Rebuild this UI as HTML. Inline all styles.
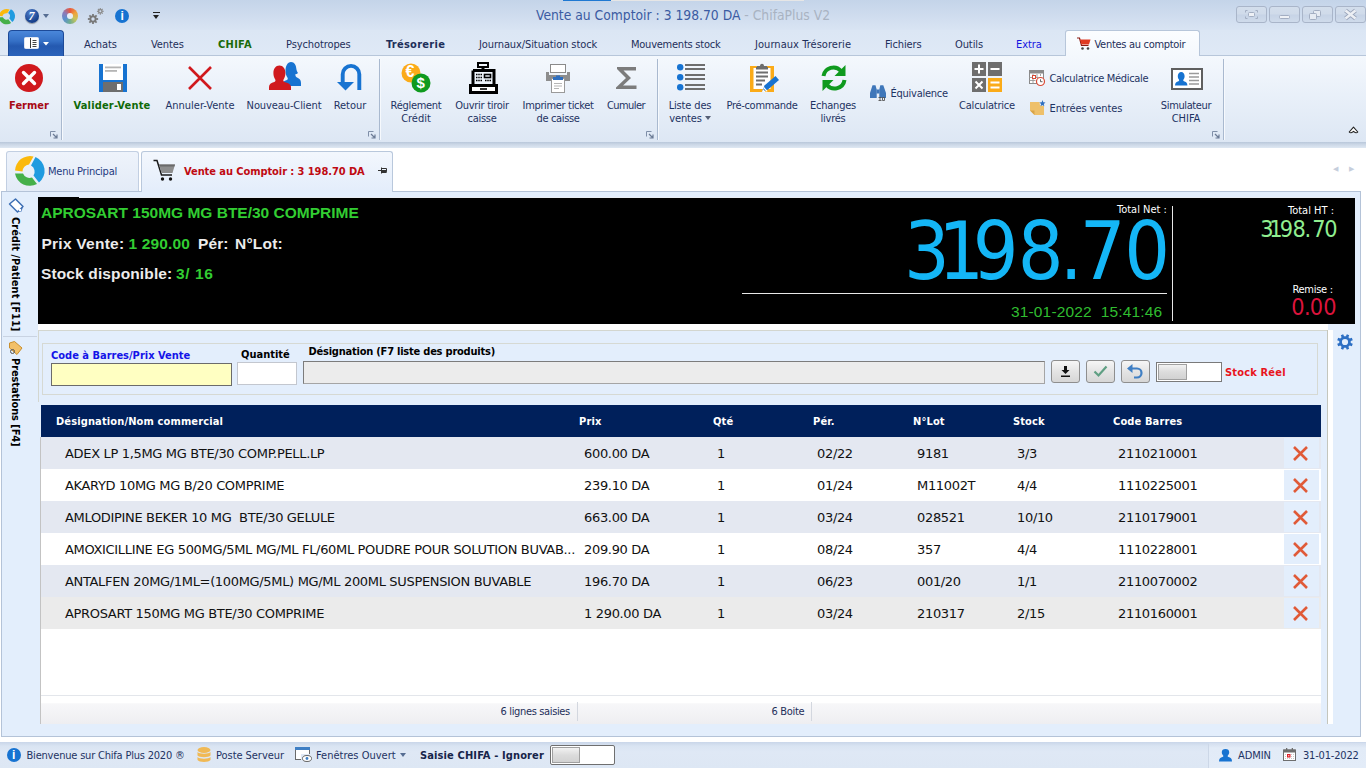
<!DOCTYPE html>
<html lang="fr">
<head>
<meta charset="utf-8">
<title>Vente au Comptoir : 3 198.70 DA - ChifaPlus V2</title>
<style>
html,body{margin:0;padding:0}
body{width:1366px;height:768px;overflow:hidden;position:relative;background:#fff;font-family:"Liberation Sans",sans-serif;font-size:11.5px;color:#1e2f5a}
.a{position:absolute}
.t{position:absolute;white-space:nowrap;line-height:14px}
.c{position:absolute;white-space:nowrap;text-align:center;line-height:13px}
svg{position:absolute;overflow:visible}
/* title bar */
#title{left:0;top:0;width:1366px;height:30px;background:linear-gradient(#c4d4e9,#d9e4f3)}
#tabs{left:0;top:30px;width:1366px;height:25px;background:linear-gradient(#dbe6f4,#dfe9f6)}
#ribbon{left:0;top:55px;width:1366px;height:87px;background:linear-gradient(#f4f8fd 0%,#e9f0f9 45%,#dde7f4 100%);border-top:1px solid #b7c6da;box-sizing:border-box}
#ribbot{left:0;top:142px;width:1366px;height:6px;background:linear-gradient(#b9c7da,#cbd7e6 40%,#dfe8f3)}
.sep{position:absolute;top:59px;width:1px;height:81px;background:#a9b9cf;box-shadow:1px 0 0 #f6f9fd}
.gm{position:absolute;top:131px;width:7px;height:7px}
.rtab{position:absolute;top:38px;letter-spacing:-.1px;line-height:14px;white-space:nowrap;font-size:11.5px;color:#1e2f5a}
.wb{top:6px;width:31px;height:17px;box-sizing:border-box;border:1px solid #a9b5c9;border-radius:3px;background:linear-gradient(#d3deec 0%,#d0dbea 48%,#c6d3e6 52%,#cfdbeb 100%)}
.rtab{font-family:"DejaVu Sans Condensed","Liberation Sans",sans-serif;font-size:11px}
.rl{font-family:"DejaVu Sans Condensed","Liberation Sans",sans-serif;font-size:11px;color:#1e3363}
.c.rl{line-height:13px}
.t.rl{line-height:14px}
.vt{font-family:"DejaVu Sans Condensed","Liberation Sans",sans-serif;font-size:11px;font-weight:700;color:#000;transform-origin:0 0;transform:rotate(90deg);line-height:12px}
.bp{font-family:"Liberation Sans",sans-serif;font-weight:700;font-size:15.500px;line-height:18px;white-space:pre}
.fl{font-family:"DejaVu Sans Condensed","Liberation Sans",sans-serif;font-size:11px;font-weight:700;color:#000;line-height:14px}
.btn{top:360px;width:29px;height:23px;box-sizing:border-box;border:1px solid #8e8e8e;border-radius:3px;background:linear-gradient(#f6f6f6,#e4e4e4 50%,#d6d6d6)}
.gh{top:415px;font-family:"DejaVu Sans Condensed","Liberation Sans",sans-serif;font-size:11px;font-weight:700;color:#fff;line-height:14px;letter-spacing:.13px}
.gr{left:41px;width:1279.500px;height:32px;font-family:"DejaVu Sans","Liberation Sans",sans-serif;font-size:13px;letter-spacing:-.33px;color:#111;line-height:34px;white-space:pre}
.gc{top:0;white-space:pre}
.xc{left:1243px;top:1px;width:35px;height:30px;background:#e3eefc}
.sb{top:749px}
</style>
</head>
<body>
<!-- TITLE BAR -->
<div class="a" id="title"></div>
<div class="a" id="tabs"></div>
<div class="a" id="ribbon"></div>
<div class="a" id="ribbot"></div>

<div class="t" id="ttl" style="left:536px;top:5px;font-family:'DejaVu Sans Condensed','Liberation Sans',sans-serif;font-size:13.75px;line-height:20px;color:#3b5ba2">Vente au Comptoir : 3 198.70 DA<span style="color:#a9b3c2"> - ChifaPlus V2</span></div>


<div class="a" style="left:563px;top:0;width:48px;height:1px;background:#1e78d2"></div><div class="a" style="left:611px;top:0;width:193px;height:1px;background:#e6e6e6"></div>
<!-- QAT icons -->
<svg style="left:-2.500px;top:6.500px" width="19.500" height="19.500" viewBox="0 0 20 20">
 <path d="M1 9 A8 8 0 0 1 12 2.6 L9.5 6.5 A4 4 0 0 0 4.6 9.6 Z" fill="#fbb90c"/>
 <path d="M13.2 2.2 A8 8 0 0 1 14.6 15.4 L11.6 11.6 A4 4 0 0 0 10.4 6.2 Z" fill="#1f9be0"/>
 <path d="M13.4 16.4 A8 8 0 0 1 0.9 10.6 L5 10.6 A4 4 0 0 0 10.6 12.6 Z" fill="#45b04a"/>
</svg>
<div class="a" style="left:25px;top:9px;width:14px;height:14px;border-radius:50%;background:radial-gradient(circle at 40% 30%,#4f7fcc,#123a86 75%);box-shadow:0 1px 1px rgba(0,0,0,.35)"></div>
<div class="t" style="left:28.5px;top:9px;font:italic bold 12px/14px 'Liberation Serif',serif;color:#fff">7</div>
<div class="a" style="left:43px;top:14px;border:3.5px solid transparent;border-top:4px solid #566d92;border-bottom:0"></div>
<div class="a" style="left:62px;top:8px;width:16px;height:16px;border-radius:50%;background:conic-gradient(#e9573d,#f0a23a,#c9c45a,#6fae8f,#5b8fcf,#8c7ab8,#e9573d)"></div>
<div class="a" style="left:67px;top:13px;width:6px;height:6px;border-radius:50%;background:#e8eef7"></div>
<svg style="left:87.800px;top:13.800px" width="10" height="10" viewBox="0 0 10 10"><path d="M10.12 4.11L10.12 5.89L8.60 5.86L8.15 6.93L9.25 7.99L7.99 9.25L6.93 8.15L5.86 8.60L5.89 10.12L4.11 10.12L4.14 8.60L3.07 8.15L2.01 9.25L0.75 7.99L1.85 6.93L1.40 5.86L-0.12 5.89L-0.12 4.11L1.40 4.14L1.85 3.07L0.75 2.01L2.01 0.75L3.07 1.85L4.14 1.40L4.11 -0.12L5.89 -0.12L5.86 1.40L6.93 1.85L7.99 0.75L9.25 2.01L8.15 3.07L8.60 4.14ZM6.70 5.00A1.7 1.7 0 1 0 3.30 5.00A1.7 1.7 0 1 0 6.70 5.00Z" fill="#787878" fill-rule="evenodd"/></svg>
<svg style="left:97px;top:8.200px" width="6.600" height="6.600" viewBox="0 0 6.600 6.600"><path d="M6.65 2.72L6.65 3.88L5.63 3.86L5.35 4.55L6.08 5.26L5.26 6.08L4.55 5.35L3.86 5.63L3.88 6.65L2.72 6.65L2.74 5.63L2.05 5.35L1.34 6.08L0.52 5.26L1.25 4.55L0.97 3.86L-0.05 3.88L-0.05 2.72L0.97 2.74L1.25 2.05L0.52 1.34L1.34 0.52L2.05 1.25L2.74 0.97L2.72 -0.05L3.88 -0.05L3.86 0.97L4.55 1.25L5.26 0.52L6.08 1.34L5.35 2.05L5.63 2.74ZM4.30 3.30A1.0 1.0 0 1 0 2.30 3.30A1.0 1.0 0 1 0 4.30 3.30Z" fill="#8c8c8c" fill-rule="evenodd"/></svg>
<div class="a" style="left:115px;top:9px;width:14px;height:14px;border-radius:50%;background:#1773d1"></div>
<div class="t" style="left:120.400px;top:9px;font:bold 12px/14px 'Liberation Sans',sans-serif;color:#fff">i</div>
<div class="a" style="left:153px;top:12px;width:7px;height:1px;background:#222"></div>
<div class="a" style="left:153px;top:15px;border:3.5px solid transparent;border-top:4px solid #222;border-bottom:0"></div>

<!-- window buttons -->
<div class="a wb" style="left:1236px"></div><div class="a wb" style="left:1269px"></div><div class="a wb" style="left:1302px"></div><div class="a wb" style="left:1335px"></div>
<svg style="left:1236px;top:6px" width="130" height="17" viewBox="0 0 130 17" fill="none" stroke="#a3aec2" stroke-width="1">
 <path d="M9.5 6.5v-2h2M19.5 4.5h2v2M21.5 10.5v2h-2M11.500 12.500h-2v-2"/>
 <rect x="12.500" y="6.500" width="6" height="4" rx="1" fill="#eef1f6"/>
 <rect x="43.500" y="9.500" width="10" height="3" rx="1" fill="#eef1f6"/>
 <rect x="77.500" y="4.500" width="7" height="6" rx="1" fill="#e6ebf3"/>
 <rect x="73.500" y="7.500" width="7" height="6" rx="1" fill="#e6ebf3"/>
 <path d="M109.500 4.500l10 8M119.500 4.500l-10 8" stroke="#9aa5ba" stroke-width="4.200"/><path d="M109.500 4.500l10 8M119.500 4.500l-10 8" stroke="#eceff4" stroke-width="2.600"/>
</svg>

<!-- ribbon tab row -->
<div class="a" style="left:8px;top:30px;width:56px;height:26px;border-radius:4px 4px 0 0;background:linear-gradient(#4a87da,#3570c6 40%,#2459b0 60%,#2b63ba);border:1px solid #1d4a98;border-bottom:0;box-sizing:border-box"></div>
<svg style="left:24px;top:37px" width="30" height="13" viewBox="0 0 30 13">
 <rect x=".5" y=".5" width="14" height="11" rx="1" fill="#fff" stroke="#dfe6f2"/>
 <path d="M6.500 1v10" stroke="#3a3a3a" stroke-width="1"/>
 <path d="M8.500 3.500h4M8.500 5.500h4M8.500 7.500h4M8.500 9.500h4" stroke="#444" stroke-width="1"/>
 <path d="M19 5h6l-3 3.500z" fill="#fff"/>
</svg>
<div class="rtab" style="left:84px">Achats</div>
<div class="rtab" style="left:151px">Ventes</div>
<div class="rtab" style="left:218px;font-weight:700;color:#1b6b0a;letter-spacing:.3px">CHIFA</div>
<div class="rtab" style="left:286px">Psychotropes</div>
<div class="rtab" style="left:386px;font-weight:700;letter-spacing:.27px">Trésorerie</div>
<div class="rtab" style="left:479px">Journaux/Situation stock</div>
<div class="rtab" style="left:631px;letter-spacing:-.24px">Mouvements stock</div>
<div class="rtab" style="left:755px;letter-spacing:.05px">Journaux Trésorerie</div>
<div class="rtab" style="left:885px">Fichiers</div>
<div class="rtab" style="left:955px">Outils</div>
<div class="rtab" style="left:1016px;color:#1515e0">Extra</div>
<div class="a" style="left:1065px;top:30px;width:135px;height:26px;box-sizing:border-box;border:1px solid #b7c6da;border-bottom:0;border-radius:3px 3px 0 0;background:linear-gradient(#fbfdff,#f4f8fd)"></div>
<svg style="left:1077px;top:37px" width="14" height="14" viewBox="0 0 14 14">
 <path d="M0 1h2.500l2 7.500h7" fill="none" stroke="#8a1a12" stroke-width="1.2"/>
 <path d="M3 2.500h10.500l-1.500 5h-7.600z" fill="#e03a22"/>
 <circle cx="5.500" cy="11.500" r="1.300" fill="#444"/><circle cx="11" cy="11.500" r="1.300" fill="#444"/>
</svg>
<div class="rtab" style="left:1094.500px;letter-spacing:-.3px">Ventes au comptoir</div>


<!-- RIBBON CONTENT -->
<div class="sep" style="left:61px"></div><div class="sep" style="left:379px"></div><div class="sep" style="left:657px"></div><div class="sep" style="left:1223px"></div>
<svg class="gmk" style="left:50px;top:131px" width="8" height="8" viewBox="0 0 8 8"><path d="M.5 5.500v-5h5" fill="none" stroke="#7f8fa8"/><path d="M3 3l4 4M7 3.500v3.500h-3.500" fill="none" stroke="#6b7b95" stroke-width="1.200"/></svg>
<svg class="gmk" style="left:368px;top:131px" width="8" height="8" viewBox="0 0 8 8"><path d="M.5 5.500v-5h5" fill="none" stroke="#7f8fa8"/><path d="M3 3l4 4M7 3.500v3.500h-3.500" fill="none" stroke="#6b7b95" stroke-width="1.200"/></svg>
<svg class="gmk" style="left:646px;top:131px" width="8" height="8" viewBox="0 0 8 8"><path d="M.5 5.500v-5h5" fill="none" stroke="#7f8fa8"/><path d="M3 3l4 4M7 3.500v3.500h-3.500" fill="none" stroke="#6b7b95" stroke-width="1.200"/></svg>
<svg class="gmk" style="left:1212px;top:131px" width="8" height="8" viewBox="0 0 8 8"><path d="M.5 5.500v-5h5" fill="none" stroke="#7f8fa8"/><path d="M3 3l4 4M7 3.500v3.500h-3.500" fill="none" stroke="#6b7b95" stroke-width="1.200"/></svg>

<!-- Fermer -->
<svg style="left:15px;top:64px" width="28" height="28" viewBox="0 0 28 28"><circle cx="14" cy="14" r="14" fill="#d0191d"/><path d="M8.500 8.500l11 11M19.500 8.500l-11 11" stroke="#fff" stroke-width="3.400" stroke-linecap="round"/></svg>
<div class="c rl" style="left:-11px;width:80px;top:99px;font-weight:700;color:#a80a14">Fermer</div>
<!-- Valider-Vente -->
<svg style="left:99px;top:64px" width="28" height="28" viewBox="0 0 28 28"><rect width="28" height="28" fill="#1773d1"/><rect x="4" y="0" width="20" height="16" fill="#fff"/><rect x="4" y="18" width="20" height="10" fill="#6e6e6e"/><rect x="18" y="20" width="4" height="6" fill="#fff"/><rect x="6" y="2.500" width="16" height="1.800" fill="#b5b5b5"/><rect x="6" y="6" width="12" height="1.800" fill="#b5b5b5"/></svg>
<div class="c rl" style="left:62px;width:100px;top:99px;font-weight:700;color:#0f6a08;letter-spacing:.17px">Valider-Vente</div>
<!-- Annuler-Vente -->
<svg style="left:188px;top:66px" width="24" height="24" viewBox="0 0 24 24"><path d="M1 1l22 22M23 1l-22 22" stroke="#d0191d" stroke-width="2.600" fill="none"/></svg>
<div class="c rl" style="left:150px;width:100px;top:99px">Annuler-Vente</div>
<!-- Nouveau-Client -->
<svg style="left:268px;top:61px" width="34" height="30" viewBox="0 0 34 30">
 <path d="M14 25v-3c1-1.500 3-2.300 5-3c.9-.4 1-1.500.4-2.500c-1.300-2-1.900-4-1.900-6.500c0-5 2-9 5.500-9s5 3 5.300 6.500c.2 2 .8 3.200 1.700 4.500c-.8.800-1.800 1.200-2.700 1.300c.1 1.500.4 2.300 1.300 2.900c2.500 1.200 4.400 2.300 4.400 5.800v3z" fill="#1773d1"/>
 <path d="M1 29v-3c0-2.800 2-4 5.300-5c1.300-.5 1.500-1.700.8-2.800c-1.200-1.800-1.700-3.800-1.700-6.200c0-4.300 2.300-7.500 6-7.500s6 3.200 6 7.500c0 2.400-.5 4.400-1.700 6.200c-.7 1.100-.5 2.300.8 2.800c3.500 1 6.500 2.200 6.500 5v3z" fill="#d0191d"/>
</svg>
<div class="c rl" style="left:234px;width:100px;top:99px;letter-spacing:-.1px">Nouveau-Client</div>
<!-- Retour -->
<svg style="left:337px;top:64px" width="26" height="26" viewBox="0 0 26 26"><path d="M22.300 26V10.200a8.300 8.300 0 0 0-16.600 0V18.500" fill="none" stroke="#1773d1" stroke-width="3.900"/><path d="M0 18h17l-8.500 8.500z" fill="#1773d1"/></svg>
<div class="c rl" style="left:300px;width:100px;top:99px">Retour</div>
<!-- Reglement Credit -->
<svg style="left:401px;top:63px" width="30" height="30" viewBox="0 0 30 30"><circle cx="10" cy="10" r="9.500" fill="#fbab18"/><circle cx="20" cy="20" r="9.500" fill="#0f9a1e"/></svg>
<div class="t" style="left:405.500px;top:63px;font:bold 16px/18px 'Liberation Sans',sans-serif;color:#fff">€</div>
<div class="t" style="left:416.500px;top:74px;font:bold 15px/18px 'Liberation Sans',sans-serif;color:#fff">$</div>
<div class="c rl" style="left:366px;width:100px;top:99px"><span style="letter-spacing:-.3px">Réglement</span><br>Crédit</div>
<!-- Ouvrir tiroir caisse -->
<svg style="left:469px;top:62px" width="29" height="32" viewBox="0 0 29 32" fill="none" stroke="#000">
 <rect x="9" y="1" width="10" height="4" stroke-width="2"/><path d="M14 5v3" stroke-width="3"/>
 <path d="M4 8.500h21v14" stroke-width="3"/><path d="M4 8.500v14" stroke-width="3"/>
 <rect x="1.500" y="23.500" width="26" height="7" stroke-width="3" fill="#fff"/>
 <path d="M11 27h7" stroke-width="1.600"/>
 <rect x="15.500" y="12.500" width="6" height="3" stroke-width="1.600"/>
 <path d="M7 12.500h6M7 15.500h6M7 18.500h6" stroke-width="1.700" stroke-dasharray="1.500 .75"/>
 <path d="M16 18.500h6" stroke-width="1.500" stroke-dasharray="1.500 .75"/>
</svg>
<div class="c rl" style="left:432px;width:100px;top:99px;letter-spacing:-.28px">Ouvrir tiroir<br>caisse</div>
<!-- Imprimer ticket -->
<svg style="left:546px;top:64px" width="24" height="30" viewBox="0 0 24 30">
 <rect x="4.500" y=".5" width="15" height="8" fill="#fff" stroke="#8a8a8a"/>
 <path d="M0 8h3v3h18v-3h3v9h-24z" fill="#8d8d8d"/>
 <rect x="5.500" y="14.500" width="13" height="14" fill="#fff" stroke="#9a9a9a"/>
 <rect x="7" y="13" width="10" height="3" fill="#2e6fc0"/><rect x="10" y="11.500" width="4" height="2" fill="#2e6fc0"/>
 <path d="M8 19.500h8M8 22h8M8 24.500h5" stroke="#b5b5b5" stroke-width="1"/>
</svg>
<div class="c rl" style="left:508px;width:100px;top:99px;letter-spacing:-.34px">Imprimer ticket<br>de caisse</div>
<!-- Cumuler -->
<svg style="left:616px;top:67px" width="21" height="22" viewBox="0 0 21 22"><path d="M1 0h19v3.500h-12.500l7.500 7.500l-8 7.500h13.500v3.500h-20.500v-1.500l10-9.500l-9-9z" fill="#7c7c7c"/></svg>
<div class="c rl" style="left:576px;width:100px;top:99px;letter-spacing:-.55px">Cumuler</div>
<!-- Liste des ventes -->
<svg style="left:677px;top:64px" width="29" height="27" viewBox="0 0 29 27">
 <circle cx="3.200" cy="3.200" r="3.200" fill="#1773d1"/><circle cx="3.200" cy="13.200" r="3.200" fill="#1773d1"/><circle cx="3.200" cy="23.200" r="3.200" fill="#1773d1"/>
 <path d="M8 1h20M8 5h20M8 11h20M8 15h20M8 21h20M8 25h20" stroke="#6e6e6e" stroke-width="1.900"/>
</svg>
<div class="c rl" style="left:640px;width:100px;top:99px;letter-spacing:-.15px">Liste des<br>ventes <span style="display:inline-block;border:3px solid transparent;border-top:4px solid #555f75;border-bottom:0;vertical-align:2px"></span></div>
<!-- Pre-commande -->
<svg style="left:750px;top:64px" width="29" height="28" viewBox="0 0 29 28">
 <rect x="0" y="2" width="24" height="26" fill="#fbab18"/><rect x="3.500" y="4" width="17" height="21" fill="#fff"/>
 <path d="M7 4v-2h3c0-3 4-3 4 0h3v2z" fill="#6e6e6e"/><rect x="6" y="3" width="12" height="2.500" fill="#6e6e6e"/>
 <path d="M6 8.500h12M6 12.500h12M6 16.500h9M6 20.500h6" stroke="#6e6e6e" stroke-width="1.900"/>
 <path d="M12 28l2.500-6.500l11-9.500l3.500 4l-11 9.500z" fill="#1773d1"/><path d="M12 28l1-3l2.800 3z" fill="#fff"/><path d="M13.600 23.500l3.600 3.800" stroke="#fff" stroke-width="1.200"/>
</svg>
<div class="c rl" style="left:712px;width:100px;top:99px;letter-spacing:-.3px">Pré-commande</div>
<!-- Echanges livres -->
<svg style="left:821px;top:65px" width="26" height="26" viewBox="0 0 26 26">
 <path d="M2.500 11a10 10 0 0 1 17.500-5" fill="none" stroke="#0f9a1e" stroke-width="4"/><path d="M24.500 0v11h-11z" fill="#0f9a1e"/>
 <path d="M23.500 15a10 10 0 0 1-17.500 5" fill="none" stroke="#0f9a1e" stroke-width="4"/><path d="M1.500 26v-11h11z" fill="#0f9a1e"/>
</svg>
<div class="c rl" style="left:783px;width:100px;top:99px;letter-spacing:-.25px">Echanges<br>livrés</div>
<!-- Equivalence -->
<svg style="left:870px;top:85px" width="16" height="16" viewBox="0 0 16 16">
 <path d="M2.500 .3h3l1.200 4.200v8.500h-6.700v-5zM10.300 .3h3l2.700 7.700v5h-6.700v-8.500z" fill="#3f77ba"/><rect x="6.500" y="4.500" width="3" height="4" fill="#3f77ba"/>
 <path d="M8.500 12.500h3M10 12.500v3M8.500 15.500h3M12.500 12.500v3h2v-3z" stroke="#555" stroke-width=".9" fill="none"/>
</svg>
<div class="t rl" style="left:890.500px;top:87px;letter-spacing:-.25px">Équivalence</div>
<!-- Calculatrice -->
<svg style="left:972px;top:62px" width="30" height="30" viewBox="0 0 30 30">
 <rect width="14" height="14" fill="#6e6e6e"/><rect x="16" width="14" height="14" fill="#6e6e6e"/><rect y="16" width="14" height="14" fill="#6e6e6e"/><rect x="16" y="16" width="14" height="14" fill="#fbab18"/>
 <path d="M7 2.500v9M2.500 7h9M18.500 7h9M3.500 19.500l7 7M10.500 19.500l-7 7M18.500 20.500h9M18.500 25.500h9" stroke="#fff" stroke-width="2"/>
</svg>
<div class="c rl" style="left:937px;width:100px;top:99px;letter-spacing:-.22px">Calculatrice</div>
<!-- Calculatrice Medicale -->
<svg style="left:1029px;top:70px" width="16" height="16" viewBox="0 0 16 16">
 <rect x=".5" y=".5" width="14" height="13" fill="#fff" stroke="#8a8a8a"/><rect x=".5" y=".5" width="14" height="3" fill="#8a8a8a"/>
 <path d="M.5 7.500h9M.5 10.500h6M4 4v9.500M8 4v4M11.500 4v2" stroke="#9a9a9a" stroke-width=".9"/>
 <rect x="3.500" y="5.500" width="3" height="3" fill="#fff" stroke="#d84a35"/>
 <circle cx="11.500" cy="11.500" r="4" fill="#fff" stroke="#d84a35" stroke-width="1.200"/><path d="M11.500 9.300v2.400h2" stroke="#555" fill="none" stroke-width=".9"/>
</svg>
<div class="t rl" style="left:1049.500px;top:72px;letter-spacing:-.33px">Calculatrice Médicale</div>
<!-- Entrees ventes -->
<svg style="left:1030px;top:100px" width="16" height="16" viewBox="0 0 16 16">
 <path d="M0 2h9.500l.5 3.500l4 .5v9h-9.500l-4.500-4.500z" fill="#eec06a"/><path d="M0 10.500h4.500v4.500z" fill="#d9a448"/>
 <path d="M12.500 0l.8 2.200l2.200.3l-1.700 1.500l.5 2.300l-1.800-1.200l-2 1.200l.6-2.300l-1.700-1.500l2.300-.3z" fill="#2e6fc0"/>
</svg>
<div class="t rl" style="left:1049.500px;top:102px;letter-spacing:-.08px">Entrées ventes</div>
<!-- Simulateur CHIFA -->
<svg style="left:1171px;top:68px" width="32" height="22" viewBox="0 0 32 22">
 <rect x="1" y="1" width="30" height="20" fill="#fff" stroke="#5f5f5f" stroke-width="2"/>
 <path d="M4 17.500c0-3 1.500-3.800 3.500-4.300c.8-.3.800-1 .4-1.600c-.8-1-1.100-2.200-1.100-3.600c0-2.300 1.400-4 3.400-4s3.400 1.700 3.400 4c0 1.400-.3 2.600-1.100 3.600c-.4.600-.4 1.300.4 1.600c2 .5 3.500 1.300 3.500 4.300z" fill="#1773d1"/>
 <path d="M18 5.500h10M18 9h10M18 12.500h10M18 16h10" stroke="#9a9a9a" stroke-width="1.500"/>
</svg>
<div class="c rl" style="left:1136px;width:100px;top:99px"><span style="letter-spacing:-.38px">Simulateur</span><br>CHIFA</div>
<!-- collapse -->
<svg style="left:1348px;top:125px" width="11" height="9" viewBox="0 0 11 9"><path d="M1.200 7l4.300-4.800l4.300 4.800c-1 1.200-2.600 1.100-4.300-.6c-1.700 1.700-3.300 1.800-4.300.6z" fill="#fff" stroke="#222" stroke-width="1.100" stroke-linejoin="round"/></svg>


<!-- DOCUMENT TABS -->
<div class="a" style="left:.500px;top:190.500px;width:1360.500px;height:546px;border:1px solid #b4c3d8;background:#e3eefc;box-sizing:border-box"></div>
<div class="a" style="left:6px;top:151px;width:133px;height:40px;box-sizing:border-box;border:1px solid #c2cfe2;border-bottom:0;border-radius:3px 3px 0 0;background:linear-gradient(#eef3fb,#e3ebf7)"></div>
<svg style="left:14px;top:155px" width="32" height="32" viewBox="0 0 32 32">
 <path d="M1 15.500A15 15 0 0 1 19.500 1.500L15 9.500A7 7 0 0 0 8.500 16.500Z" fill="#fbb90c"/>
 <path d="M21.500 2A15 15 0 0 1 25 27.500L19.500 20.500A7 7 0 0 0 17 10.500Z" fill="#1f9be0"/>
 <path d="M23 29A15 15 0 0 1 1 18.500L9 18.500A7 7 0 0 0 18 22.500Z" fill="#45b04a"/>
</svg>
<div class="t rl" style="left:48px;top:165px;color:#1e3a80;letter-spacing:-.25px">Menu Principal</div>
<div class="a" style="left:141px;top:151px;width:252px;height:41px;box-sizing:border-box;border:1px solid #b9c8dc;border-bottom:0;border-radius:3px 3px 0 0;background:linear-gradient(#f3f7fd,#e3edfb)"></div>
<svg style="left:153px;top:159px" width="23" height="23" viewBox="0 0 23 23">
 <path d="M.5 1.500h3.500l4.500 14.500h10.500" fill="none" stroke="#1a1a1a" stroke-width="1.500"/>
 <path d="M6 5.500h16l-2.500 8.500h-11z" fill="#8d8d8d"/><path d="M6 5.500h16l-.6 2h-14.800z" fill="#6a6a6a"/>
 <circle cx="9.500" cy="20" r="1.700" fill="#111"/><circle cx="17.500" cy="20" r="1.700" fill="#111"/>
</svg>
<div class="t rl" style="left:184px;top:165px;font-weight:700;color:#bf0a12;letter-spacing:-.07px">Vente au Comptoir : 3 198.70 DA</div>
<svg style="left:378px;top:167px" width="9" height="8" viewBox="0 0 9 8"><path d="M0 3.500h3M3.500 .5v6M3.500 1.500h5v3h-5M3.500 5.500h5" fill="none" stroke="#333" stroke-width="1"/><rect x="4" y="3" width="4.500" height="2.500" fill="#333"/></svg>
<div class="t" style="left:1333px;top:165px;font-size:7px;line-height:8px;color:#c5cedc">&#9664;</div>
<div class="t" style="left:1349px;top:165px;font-size:7px;line-height:8px;color:#c5cedc">&#9654;</div>

<!-- LEFT SIDEBAR -->
<div class="a" style="left:2.500px;top:336px;width:34px;height:1px;background:#c9d3e2"></div>
<svg style="left:8px;top:198px" width="16" height="16" viewBox="0 0 16 16"><path d="M7.500 1l7.500 7.500l-5.500 5.500l-8-8z" fill="#fff" stroke="#3c6eb4" stroke-width="1.500" stroke-linejoin="round"/><path d="M9.500 14l5.500-5.500l-1.500 5z" fill="#3c6eb4"/><circle cx="12" cy="12" r="1.300" fill="#fff"/></svg>
<div class="t vt" style="left:21px;top:217px">Crédit /Patient [F11]</div>
<svg style="left:8px;top:340px" width="16" height="16" viewBox="0 0 16 16"><path d="M6.500 1.500l7.500 6.500l-5 6.500l-7.500-6.500v-5z" fill="#f2c069" stroke="#c98f2e" stroke-width="1" stroke-linejoin="round"/><circle cx="4.500" cy="11.500" r="2" fill="none" stroke="#555" stroke-width="1"/></svg>
<div class="t vt" style="left:21px;top:358px;letter-spacing:-.1px">Prestations [F4]</div>

<!-- BLACK PANEL -->
<div class="a" style="left:38px;top:197px;width:1317px;height:127px;background:#000"></div>
<div class="a" style="left:79px;top:197px;width:1276px;height:1px;background:#e9edf3"></div>
<div class="a" style="left:38px;top:324px;width:1290px;height:6px;background:#fff"></div>
<div class="t bp" style="left:41px;top:203.500px;color:#32cd32">APROSART 150MG MG BTE/30 COMPRIME</div>
<div class="t bp" style="left:41.500px;top:235px;color:#ececec;letter-spacing:.25px">Prix Vente:</div>
<div class="t bp" style="left:128.500px;top:235px;color:#32cd32;letter-spacing:.15px">1 290.00</div>
<div class="t bp" style="left:198px;top:235px;color:#ececec;letter-spacing:.1px">Pér:</div>
<div class="t bp" style="left:235px;top:235px;color:#ececec;letter-spacing:.2px">N°Lot:</div>
<div class="t bp" style="left:41px;top:265px;color:#ececec;letter-spacing:.13px">Stock disponible:</div>
<div class="t bp" style="left:176px;top:265px;color:#32cd32;letter-spacing:.6px">3/ 16</div>
<div class="t rl" style="left:1117px;top:203px;color:#fff">Total Net :</div>
<div class="t" id="big" style="left:904.11px;top:204.5px;font-family:'DejaVu Sans Condensed','Liberation Sans',sans-serif;font-size:80px;line-height:94px;color:#14b6f6"><span>3</span><span style="margin-left:-11.78px">1</span><span style="margin-left:-11.28px">9</span><span style="margin-left:-0.78px">8</span><span style="margin-left:-3.82px">.</span><span style="margin-left:-2.82px">7</span><span style="margin-left:-1.28px">0</span></div>
<div class="a" style="left:742px;top:293px;width:425px;height:1px;background:#e8e8e8"></div>
<div class="a" style="left:1172px;top:206px;width:1px;height:115px;background:#e8e8e8"></div>
<div class="t" style="left:1011px;top:303px;font-size:15.500px;line-height:18px;color:#30bd30;letter-spacing:.15px;white-space:pre">31-01-2022  15:41:46</div>
<div class="t rl" style="left:1288px;top:204px;color:#fff">Total HT :</div>
<div class="t" id="ht" style="left:1260.13px;top:214.5px;font-family:'DejaVu Sans Condensed','Liberation Sans',sans-serif;font-size:23.3px;line-height:27px;color:#90ee90"><span>3</span><span style="margin-left:-4.14px">1</span><span style="margin-left:-2.94px">9</span><span style="margin-left:-0.54px">8</span><span style="margin-left:-1.40px">.</span><span style="margin-left:1.00px">7</span><span style="margin-left:-1.24px">0</span></div>
<div class="t rl" style="left:1292.500px;top:283px;color:#fff;letter-spacing:-.3px">Remise :</div>
<div class="t" id="rem" style="left:1291.33px;top:293.3px;font-family:'DejaVu Sans Condensed','Liberation Sans',sans-serif;font-size:23.3px;line-height:27px;color:#dc143c"><span>0</span><span style="margin-left:-0.70px">.</span><span style="margin-left:-0.90px">0</span><span style="margin-left:0.06px">0</span></div>


<!-- FORM PANEL -->
<div class="a" style="left:38px;top:330px;width:1290px;height:72px;box-sizing:border-box;border:1px solid #d3d6cf;border-bottom:0;background:#e3eefc"></div>
<div class="a" style="left:42px;top:343px;width:1276px;height:52px;box-sizing:border-box;border:1px solid #d6d9d3"></div>
<div class="t fl" style="left:51px;top:349px;color:#1414e8">Code à Barres/Prix Vente</div>
<div class="a" style="left:51px;top:363px;width:181px;height:23px;box-sizing:border-box;border:1px solid #6b6b6b;background:#ffffc2"></div>
<div class="t fl" style="left:241px;top:348px">Quantité</div>
<div class="a" style="left:237px;top:362px;width:60px;height:23px;box-sizing:border-box;border:1px solid #c3c7cf;background:#fff"></div>
<div class="t fl" style="left:308.500px;top:345px;letter-spacing:-.22px">Désignation (F7 liste des produits)</div>
<div class="a" style="left:303px;top:361px;width:742px;height:23px;box-sizing:border-box;border:1px solid #7c7c7c;border-right-color:#a5a5a5;border-bottom-color:#a5a5a5;background:#ececec"></div>
<div class="a btn" style="left:1051px"></div><div class="a btn" style="left:1086px"></div><div class="a btn" style="left:1121px"></div>
<svg style="left:1060px;top:366px" width="11" height="11" viewBox="0 0 11 11"><path d="M4 0h3v4h2.500l-4 4l-4-4h2.500z" fill="#111"/><rect x="1" y="9.500" width="9" height="1.500" fill="#111"/></svg>
<svg style="left:1093px;top:365px" width="15" height="12" viewBox="0 0 15 12"><path d="M1.500 6.500l4 4l8-9" fill="none" stroke="#5f9f83" stroke-width="2.200"/></svg>
<svg style="left:1127px;top:363px" width="17" height="16" viewBox="0 0 17 16"><path d="M3 5.500h7a4.500 4.500 0 0 1 0 9h-3" fill="none" stroke="#3f7fc4" stroke-width="2.200"/><path d="M0 5.500l5.500-4.500v9z" fill="#3f7fc4"/></svg>
<div class="a" style="left:1156px;top:362px;width:66px;height:20px;box-sizing:border-box;border:1px solid #7a7a7a;background:#fff"></div>
<div class="a" style="left:1158px;top:364px;width:29px;height:16px;box-sizing:border-box;border:1px solid #a0a0a0;background:linear-gradient(#f2f2f2,#dcdcdc 50%,#d2d2d2)"></div>
<div class="t fl" style="left:1225px;top:366px;color:#e8141c;letter-spacing:.17px">Stock Réel</div>
<svg style="left:1337px;top:334px" width="16" height="16" viewBox="0 0 16 16"><path d="M15.78 9.87L14.82 12.18L12.69 11.41L11.41 12.69L12.18 14.82L9.87 15.78L8.91 13.73L7.09 13.73L6.13 15.78L3.82 14.82L4.59 12.69L3.31 11.41L1.18 12.18L0.22 9.87L2.27 8.91L2.27 7.09L0.22 6.13L1.18 3.82L3.31 4.59L4.59 3.31L3.82 1.18L6.13 0.22L7.09 2.27L8.91 2.27L9.87 0.22L12.18 1.18L11.41 3.31L12.69 4.59L14.82 3.82L15.78 6.13L13.73 7.09L13.73 8.91ZM11.10 8.00A3.1 3.1 0 1 0 4.90 8.00A3.1 3.1 0 1 0 11.10 8.00Z" fill="#2d6fc4" fill-rule="evenodd"/></svg>

<!-- GRID -->
<div class="a" style="left:40px;top:437px;width:1px;height:287px;background:#c3c3c3"></div>
<div class="a" style="left:41px;top:405px;width:1279.500px;height:319px;background:#fff"></div>
<div class="a" style="left:41px;top:405px;width:1279.500px;height:32px;background:#00205b"></div>
<div class="t gh" style="left:56px">Désignation/Nom commercial</div>
<div class="t gh" style="left:579px">Prix</div>
<div class="t gh" style="left:713px">Qté</div>
<div class="t gh" style="left:813px">Pér.</div>
<div class="t gh" style="left:913px">N°Lot</div>
<div class="t gh" style="left:1013px">Stock</div>
<div class="t gh" style="left:1113px">Code Barres</div>
<div class="a gr" style="top:437px;background:#e4e8f1"><span class="a gc" style="left:24px">ADEX LP 1,5MG MG BTE/30 COMP.PELL.LP</span><span class="a gc" style="left:543px">600.00 DA</span><span class="a gc" style="left:676px">1</span><span class="a gc" style="left:776px">02/22</span><span class="a gc" style="left:876px">9181</span><span class="a gc" style="left:976px">3/3</span><span class="a gc" style="left:1077px">2110210001</span><span class="a xc"></span><svg style="left:1252px;top:9px" width="15" height="15" viewBox="0 0 15 15"><path d="M1 1l13 13M14 1l-13 13" stroke="#e05a38" stroke-width="2.600" fill="none"/></svg></div>
<div class="a gr" style="top:469px;background:#ffffff"><span class="a gc" style="left:24px">AKARYD 10MG MG B/20 COMPRIME</span><span class="a gc" style="left:543px">239.10 DA</span><span class="a gc" style="left:676px">1</span><span class="a gc" style="left:776px">01/24</span><span class="a gc" style="left:876px">M11002T</span><span class="a gc" style="left:976px">4/4</span><span class="a gc" style="left:1077px">1110225001</span><span class="a xc"></span><svg style="left:1252px;top:9px" width="15" height="15" viewBox="0 0 15 15"><path d="M1 1l13 13M14 1l-13 13" stroke="#e05a38" stroke-width="2.600" fill="none"/></svg></div>
<div class="a gr" style="top:501px;background:#e4e8f1"><span class="a gc" style="left:24px">AMLODIPINE BEKER 10 MG  BTE/30 GELULE</span><span class="a gc" style="left:543px">663.00 DA</span><span class="a gc" style="left:676px">1</span><span class="a gc" style="left:776px">03/24</span><span class="a gc" style="left:876px">028521</span><span class="a gc" style="left:976px">10/10</span><span class="a gc" style="left:1077px">2110179001</span><span class="a xc"></span><svg style="left:1252px;top:9px" width="15" height="15" viewBox="0 0 15 15"><path d="M1 1l13 13M14 1l-13 13" stroke="#e05a38" stroke-width="2.600" fill="none"/></svg></div>
<div class="a gr" style="top:533px;background:#ffffff"><span class="a gc" style="left:24px">AMOXICILLINE EG 500MG/5ML MG/ML FL/60ML POUDRE POUR SOLUTION BUVAB...</span><span class="a gc" style="left:543px">209.90 DA</span><span class="a gc" style="left:676px">1</span><span class="a gc" style="left:776px">08/24</span><span class="a gc" style="left:876px">357</span><span class="a gc" style="left:976px">4/4</span><span class="a gc" style="left:1077px">1110228001</span><span class="a xc"></span><svg style="left:1252px;top:9px" width="15" height="15" viewBox="0 0 15 15"><path d="M1 1l13 13M14 1l-13 13" stroke="#e05a38" stroke-width="2.600" fill="none"/></svg></div>
<div class="a gr" style="top:565px;background:#e4e8f1"><span class="a gc" style="left:24px">ANTALFEN 20MG/1ML=(100MG/5ML) MG/ML 200ML SUSPENSION BUVABLE</span><span class="a gc" style="left:543px">196.70 DA</span><span class="a gc" style="left:676px">1</span><span class="a gc" style="left:776px">06/23</span><span class="a gc" style="left:876px">001/20</span><span class="a gc" style="left:976px">1/1</span><span class="a gc" style="left:1077px">2110070002</span><span class="a xc"></span><svg style="left:1252px;top:9px" width="15" height="15" viewBox="0 0 15 15"><path d="M1 1l13 13M14 1l-13 13" stroke="#e05a38" stroke-width="2.600" fill="none"/></svg></div>
<div class="a gr" style="top:597px;background:#ebebeb"><span class="a gc" style="left:24px">APROSART 150MG MG BTE/30 COMPRIME</span><span class="a gc" style="left:543px">1 290.00 DA</span><span class="a gc" style="left:676px">1</span><span class="a gc" style="left:776px">03/24</span><span class="a gc" style="left:876px">210317</span><span class="a gc" style="left:976px">2/15</span><span class="a gc" style="left:1077px">2110160001</span><span class="a xc"></span><svg style="left:1252px;top:9px" width="15" height="15" viewBox="0 0 15 15"><path d="M1 1l13 13M14 1l-13 13" stroke="#e05a38" stroke-width="2.600" fill="none"/></svg></div>

<div class="a" style="left:41px;top:695px;width:1279.500px;height:29px;box-sizing:border-box;border-top:1px solid #e3e6eb;background:linear-gradient(#fff 0,#fff 26%,#f7f7f9 27%,#eeeef1 100%)"></div>
<div class="a" style="left:577px;top:702px;width:1px;height:19px;background:#d3d7df"></div>
<div class="a" style="left:811px;top:702px;width:1px;height:19px;background:#d3d7df"></div>
<div class="t rl" style="left:500.500px;top:705px;letter-spacing:-.35px;color:#1e2f5a">6 lignes saisies</div>
<div class="t rl" style="left:771.500px;top:705px;letter-spacing:-.3px;color:#1e2f5a">6 Boite</div>


<!-- white splitter strip -->
<div class="a" style="left:1327px;top:330px;width:1px;height:394px;background:#c4c6bd"></div><div class="a" style="left:1328px;top:330px;width:4.800px;height:394px;background:#fff"></div>
<!-- STATUS BAR -->
<div class="a" style="left:0;top:742px;width:1366px;height:26px;background:linear-gradient(#c9d6e9,#d9e4f2 4px,#dfe8f5 10px,#dde7f4)"></div>
<div class="a" style="left:1209px;top:743px;width:157px;height:25px;background:linear-gradient(#d3deee,#e2ebf7 5px,#e3ecf8)"></div><div class="a" style="left:1208px;top:744px;width:1px;height:24px;background:#ccd7e7"></div>
<div class="a" style="left:6.500px;top:747.500px;width:14.500px;height:14.500px;border-radius:50%;background:#1773d1"></div>
<div class="t" style="left:12.100px;top:748px;font:bold 12px/14px 'Liberation Sans',sans-serif;color:#fff">i</div>
<div class="t rl sb" style="left:26.500px;letter-spacing:-.2px">Bienvenue sur Chifa Plus 2020 ®</div>
<svg style="left:197px;top:747px" width="14" height="16" viewBox="0 0 14 16"><g fill="#f0b955"><ellipse cx="7" cy="3" rx="6.500" ry="3"/><path d="M.5 5c1.500 2.200 11.500 2.200 13 0v3.500c-1.500 2.300-11.500 2.300-13 0z"/><path d="M.5 10c1.500 2.200 11.500 2.200 13 0v3c-1.500 2.600-11.500 2.600-13 0z"/></g></svg>
<div class="t rl sb" style="left:216px;letter-spacing:-.05px">Poste Serveur</div>
<svg style="left:295px;top:747px" width="18" height="16" viewBox="0 0 18 16"><rect x=".5" y=".5" width="14" height="12" fill="#fff" stroke="#6a6a6a"/><rect x="0" y="0" width="15" height="3" fill="#3f7fc4"/><rect x="6" y="7" width="12" height="9" fill="#dfe8f5"/><ellipse cx="12" cy="11.500" rx="4.500" ry="3" fill="#fff" stroke="#666" stroke-width="1"/><circle cx="12" cy="11.500" r="1.400" fill="#3f7fc4"/></svg>
<div class="t rl sb" style="left:316px">Fenêtres Ouvert</div>
<div class="a" style="left:400px;top:753px;border:3.500px solid transparent;border-top:4px solid #566d92;border-bottom:0"></div>
<div class="t rl sb" style="left:420px;font-weight:700;color:#16244a;letter-spacing:.13px">Saisie CHIFA - Ignorer</div>
<div class="a" style="left:549.500px;top:745px;width:65px;height:20px;box-sizing:border-box;border:1px solid #6f6f6f;border-radius:2px;background:#fff"></div>
<div class="a" style="left:552px;top:747px;width:28px;height:16px;box-sizing:border-box;border:1px solid #a0a0a0;background:linear-gradient(#f2f2f2,#dcdcdc 50%,#d2d2d2)"></div>
<svg style="left:1218.500px;top:748.500px" width="13" height="12.500" viewBox="0 0 13 12.500"><path d="M0 12.500c0-3 1.500-4 3.500-4.500c1-.3 1-1 .5-1.700c-.9-1-1.200-2-1.200-3.300c0-1.800 1.400-3 3.700-3s3.700 1.200 3.700 3c0 1.300-.3 2.300-1.200 3.300c-.5.700-.5 1.400.5 1.700c2 .5 3.500 1.500 3.500 4.500z" fill="#1773d1"/></svg>
<div class="t rl sb" style="left:1238px;letter-spacing:-.1px">ADMIN</div>
<svg style="left:1283px;top:748px" width="13" height="13" viewBox="0 0 13 13"><rect x=".5" y="2" width="12" height="10.500" fill="#fff" stroke="#6e6e6e"/><rect x=".5" y="1.500" width="12" height="3" fill="#6e6e6e"/><rect x="3" y="0" width="1.300" height="2.500" fill="#6e6e6e"/><rect x="8.700" y="0" width="1.300" height="2.500" fill="#6e6e6e"/><path d="M2 6.500h9M2 8.500h9M2 10.500h9" stroke="#c9c9c9" stroke-width="1" stroke-dasharray="1 1"/><rect x="4" y="6" width="3.500" height="3.500" fill="#e0202a"/><rect x="5.200" y="7.200" width="1.100" height="1.100" fill="#fff"/></svg>
<div class="t rl sb" style="left:1303px;letter-spacing:-.18px">31-01-2022</div>



</body>
</html>
